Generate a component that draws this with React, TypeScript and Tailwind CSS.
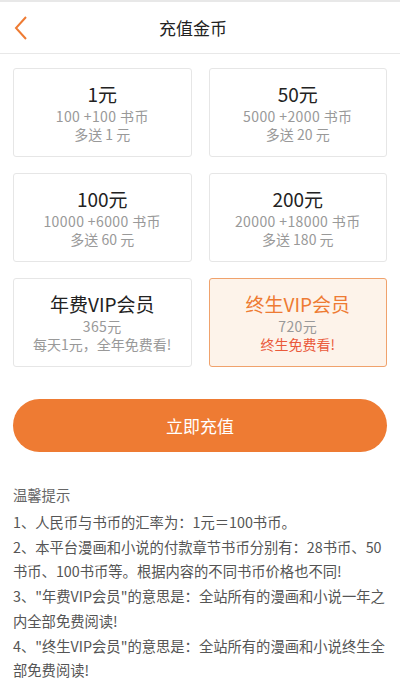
import React from 'react'

const font = { fontFamily: '"Noto Sans CJK SC", "Noto Sans", sans-serif' }

type Plan = { title: string; sub: string; extra: string; active?: boolean }

const plans: Plan[] = [
  { title: '1元', sub: '100 +100 书币', extra: '多送 1 元' },
  { title: '50元', sub: '5000 +2000 书币', extra: '多送 20 元' },
  { title: '100元', sub: '10000 +6000 书币', extra: '多送 60 元' },
  { title: '200元', sub: '20000 +18000 书币', extra: '多送 180 元' },
  { title: '年费VIP会员', sub: '365元', extra: '每天1元，全年免费看!' },
  { title: '终生VIP会员', sub: '720元', extra: '终生免费看!', active: true },
]

const PlanCard = ({ p }: { p: Plan }) => (
  <div
    className={
      'h-[89px] rounded-[3px] border flex flex-col items-center justify-center ' +
      (p.active ? 'border-[#f0a26c] bg-[#fdf3ea]' : 'border-[#e6e6e6] bg-white')
    }
  >
    <div className={'text-[19px] leading-[24px] ' + (p.active ? 'text-[#ee7b33]' : 'text-[#222]')}>{p.title}</div>
    <div className="text-[14px] leading-[18px] tracking-[0.4px] text-[#999] mt-[1px]">{p.sub}</div>
    <div className={'text-[14px] leading-[18px] ' + (p.active ? 'text-[#ea5a3a]' : 'text-[#999]')}>{p.extra}</div>
  </div>
)

export default function App() {
  return (
    <div className="w-[400px] h-[678px] overflow-hidden bg-white" style={font}>
      <div className="h-[2px] bg-[#e8e8e8]" />
      <div className="h-[52px] border-b border-[#e8e8e8] flex items-center relative">
        <svg className="absolute left-[13px] top-[13px]" width="16" height="26" viewBox="0 0 16 26" fill="none">
          <path d="M13 2 L3 13 L13 24" stroke="#ee7b33" strokeWidth="2" />
        </svg>
        <div className="w-full text-center text-[17px] text-[#222] pr-[14px]">充值金币</div>
      </div>

      <div className="grid grid-cols-2 gap-x-[17px] gap-y-[16px] px-[13px] pt-[14px]">
        {plans.map((p) => (
          <PlanCard key={p.title} p={p} />
        ))}
      </div>

      <div className="px-[13px] mt-[32px]">
        <button className="w-full h-[53px] rounded-full bg-[#ee7b33] text-white text-[17px]">立即充值</button>
      </div>

      <div className="pl-[13px] pr-[10px] mt-[30px] text-[14.3px] text-[#555]">
        <div className="leading-[25px] text-[#666]">温馨提示</div>
        <div className="mt-[3px] leading-[24.7px]">
          <p>1、人民币与书币的汇率为：1元＝100书币。</p>
          <p>2、本平台漫画和小说的付款章节书币分别有：28书币、50书币、100书币等。根据内容的不同书币价格也不同!</p>
          <p>3、"年费VIP会员"的意思是：全站所有的漫画和小说一年之内全部免费阅读!</p>
          <p>4、"终生VIP会员"的意思是：全站所有的漫画和小说终生全部免费阅读!</p>
        </div>
      </div>
    </div>
  )
}
